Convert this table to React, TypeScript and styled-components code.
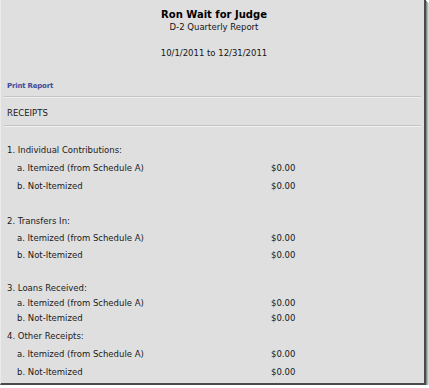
import React from "react";
import styled, { createGlobalStyle } from "styled-components";

const Global = createGlobalStyle`
  html, body { margin: 0; padding: 0; background: #ffffff; }
  body { font-family: "DejaVu Sans", Verdana, sans-serif; }
`;

const Frame = styled.div`
  box-sizing: border-box;
  width: 426px;
  height: 385px;
  background: #dfdfdf;
  border-left: 1px solid #ebebeb;
  border-right: 2px solid #4a4a4a;
  border-bottom: 2px solid #4a4a4a;
  box-shadow: 1px 1px 0 #8a8a8a, 2px 2px 0 #b4b4b4, 3px 3px 0 #d8d8d8;
  color: #1a1a1a;
  font-size: 8.5px;
  overflow: hidden;
`;

const Header = styled.header`
  display: flex;
  flex-direction: column;
  align-items: center;
  padding: 7px 0 0 3px;
`;

const Title = styled.h1`
  margin: 0;
  font-size: 10px;
  line-height: 15px;
  font-weight: bold;
  color: #000000;
`;

const Subtitle = styled.div<{ $gap?: number; $h: number }>`
  margin-top: ${(p) => p.$gap ?? 0}px;
  height: ${(p) => p.$h}px;
  line-height: ${(p) => p.$h}px;
  font-size: 8.5px;
  color: #161616;
`;

const PrintLink = styled.a`
  display: block;
  margin: 22px 0 0 6px;
  height: 10px;
  line-height: 10px;
  font-size: 7px;
  font-weight: bold;
  letter-spacing: -0.2px;
  color: #3a4b9c;
  text-decoration: none;
`;

const Rule = styled.hr<{ $gap: number }>`
  margin: ${(p) => p.$gap}px 3px 0 3px;
  height: 0;
  border: none;
  border-top: 1px solid #c4c4c4;
  border-bottom: 1px solid #efefef;
`;

const SectionTitle = styled.div`
  padding: 9px 0 6px 6px;
  height: 12px;
  line-height: 12px;
`;

const Group = styled.section<{ $gap: number }>`
  margin-top: ${(p) => p.$gap}px;
`;

const Line = styled.div<{ $h: number; $indent?: boolean }>`
  display: grid;
  grid-template-columns: ${(p) => (p.$indent ? "254px auto" : "auto")};
  padding-left: ${(p) => (p.$indent ? 16 : 6)}px;
  height: ${(p) => p.$h}px;
  line-height: ${(p) => p.$h}px;
  white-space: nowrap;
`;

const Amount = styled.span`
  color: #161616;
`;

type GroupSpec = { title: string; gap: number; h: number };

const groups: GroupSpec[] = [
  { title: "1. Individual Contributions:", gap: 14.5, h: 18 },
  { title: "2. Transfers In:", gap: 18, h: 17 },
  { title: "3. Loans Received:", gap: 16.5, h: 15 },
  { title: "4. Other Receipts:", gap: 1.5, h: 18 },
];

const items = ["a. Itemized (from Schedule A)", "b. Not-Itemized"];

export default function App() {
  return (
    <>
      <Global />
      <Frame>
        <Header>
          <Title>Ron Wait for Judge</Title>
          <Subtitle $h={11}>D-2 Quarterly Report</Subtitle>
          <Subtitle $gap={14} $h={12}>
            10/1/2011 to 12/31/2011
          </Subtitle>
        </Header>
        <PrintLink href="#">Print Report</PrintLink>
        <Rule $gap={4.5} />
        <SectionTitle>RECEIPTS</SectionTitle>
        <Rule $gap={0} />
        {groups.map((g) => (
          <Group key={g.title} $gap={g.gap}>
            <Line $h={g.h}>{g.title}</Line>
            {items.map((it) => (
              <Line key={it} $h={g.h} $indent>
                <span>{it}</span>
                <Amount>$0.00</Amount>
              </Line>
            ))}
          </Group>
        ))}
      </Frame>
    </>
  );
}
